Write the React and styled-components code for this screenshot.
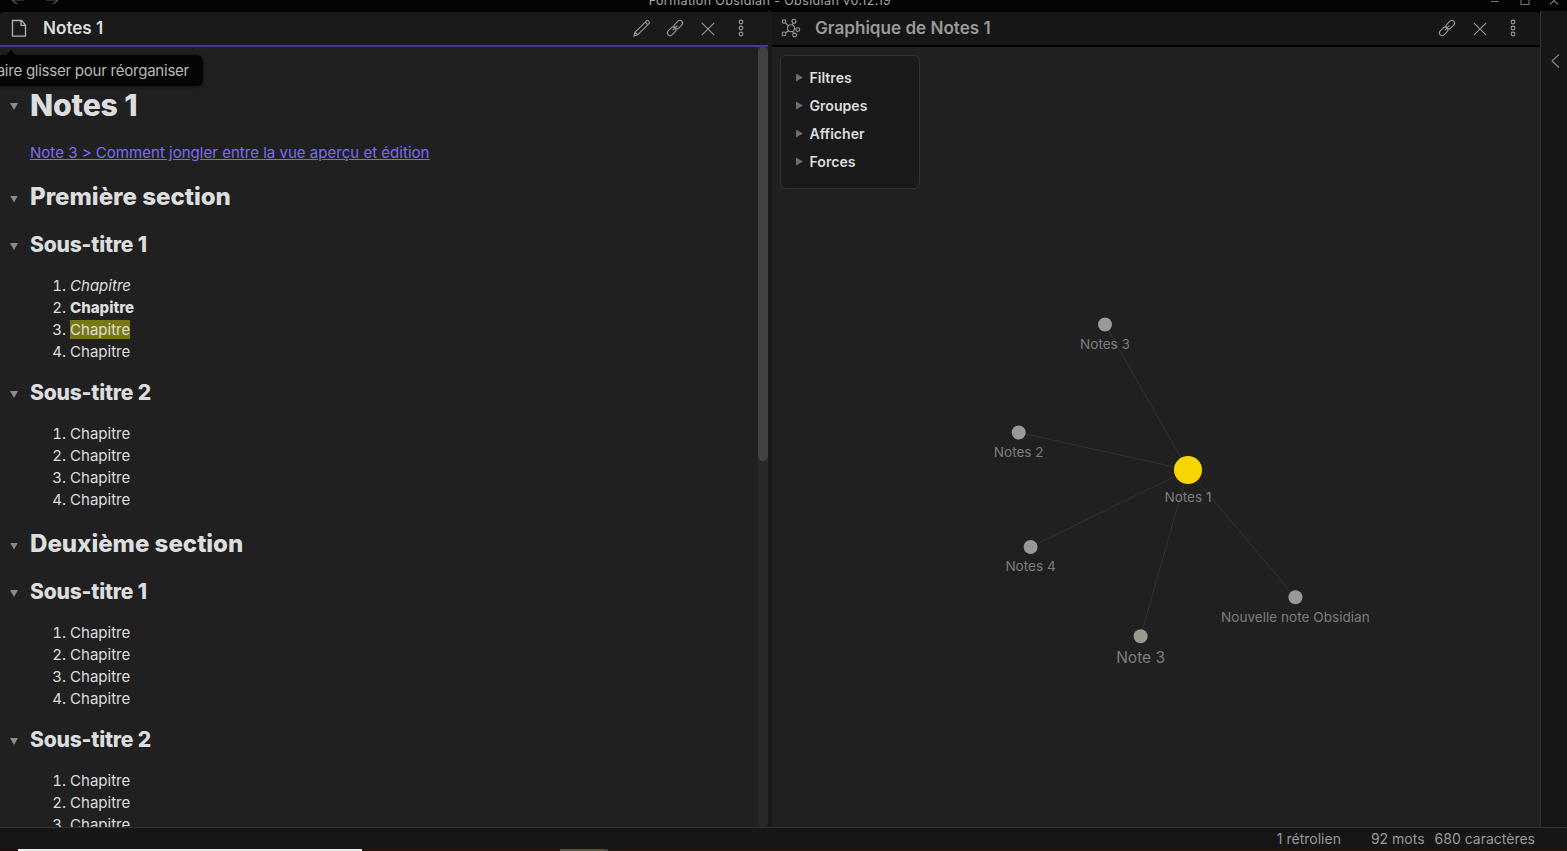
import React from 'react';
import styled, { createGlobalStyle } from 'styled-components';

const Global = createGlobalStyle`
  * { box-sizing: border-box; }
  body { margin: 0; background: #161616; color: #dcddde; font-family: Inter, "Liberation Sans", sans-serif; overflow: hidden; }
`;
const Window = styled.div`
  width: 1567px; height: 851px; display: flex; flex-direction: column; overflow: hidden;
`;
const TitleBar = styled.header`
  height: 11px; flex: none; background: #040404; display: flex; justify-content: space-between;
  align-items: flex-end; overflow: hidden;
`;
const Title = styled.div`
  font-size: 12.5px; line-height: 20px; height: 20px; letter-spacing: 0.38px; color: #a8a8a8; white-space: nowrap;
  padding-right: 27px;
`;
const BarSide = styled.div`
  width: 100px; height: 11px; display: flex; justify-content: ${(p) => (p.$end ? 'flex-end' : 'flex-start')};
`;
const Main = styled.main` flex: 1; display: flex; min-height: 0; background: #1a1a1a; `;
const Pane = styled.section`
  width: 768px; margin-right: ${(p) => p.$gap || 0}px; display: flex; flex-direction: column; padding-top: 1px;
  background: #000; 
`;
const PaneHeader = styled.div`
  height: 35px; flex: none; display: flex; align-items: center; background: ${(p) => (p.$active ? '#1a1a1a' : '#161616')};
  border-bottom: 2px solid ${(p) => (p.$active ? '#483699' : '#000')};
  padding: 0 16px 1px 8px; border-radius: ${(p) => (p.$active ? '4px 0 0 0' : '0 4px 0 0')};
`;
const PaneTitle = styled.div`
  flex: 1; margin-left: ${(p) => p.$left}px; font-size: 17.1px; line-height: 22px; font-weight: 600;
  color: ${(p) => (p.$active ? '#dcddde' : '#999')};
`;
const Actions = styled.div` display: flex; gap: 11px; `;
const Icon = styled.svg`
  width: ${(p) => p.$size || 22}px; height: 22px; flex: none; display: block; fill: none; stroke: ${(p) => p.$color || '#999'};
  stroke-width: ${(p) => p.$w || 1.1}; stroke-linejoin: round; overflow: visible;
`;
const Scroller = styled.div` flex: 1; min-height: 0; display: flex; background: #202020; `;
const Doc = styled.article` flex: 1; padding: 36px 0 0 30px; overflow: hidden; font-size: 15.05px; line-height: 22px; `;
const Track = styled.div` width: 10px; background: #292929; border-radius: 0 0 5px 5px; `;
const Thumb = styled.div` height: 414px; background: #424242; border-radius: 5px; `;
const Heading = styled.div`
  display: flex; align-items: center; margin: 0 0 15px -20px; font-weight: 800; white-space: nowrap;
  padding-bottom: ${(p) => (p.$level === 1 ? 1 : 0)}px;
  height: ${(p) => ({ 1: 44, 2: 36, 3: 30 }[p.$level])}px;
  font-size: ${(p) => ({ 1: 30.3, 2: 24.1, 3: 21.1 }[p.$level])}px;
  letter-spacing: ${(p) => ({ 1: -0.2, 2: -0.03, 3: -0.22 }[p.$level])}px;
`;
const Caret = styled.i`
  width: 8px; height: 7px; margin: ${(p) => (p.$level === 3 ? 3 : 4)}px 12px 0 0; background: #8a8a8a; clip-path: polygon(0 0, 100% 0, 50% 100%);
`;
const Link = styled.a` display: block; margin-bottom: 15px; color: #7b6cf6; text-decoration: underline; `;
const List = styled.ol` margin: 0 0 15px; padding-left: 40px; `;
const Strong = styled.strong` font-weight: 800; `;
const Mark = styled.mark` background: #787812; color: inherit; `;
const Tooltip = styled.div`
  position: absolute; left: -20px; top: 55px; width: 223px; height: 31px; border-radius: 6px; background: #050505;
  color: #b8b8b8; font-size: 15.1px; letter-spacing: -0.28px; line-height: 31px; white-space: nowrap; box-shadow: 0 1px 4px rgba(0,0,0,.5);
  display: flex; justify-content: flex-end; padding-right: 14px;
  &::before { content: ''; position: absolute; left: 26px; top: -5px; border: 5px solid transparent; border-top: 0; border-bottom-color: #050505; }
`;
const GraphArea = styled.div` flex: 1; position: relative; background: #202020; `;
const Graph = styled.svg`
  position: absolute; inset: 0; width: 768px; height: 780px; font-family: Inter, sans-serif;
`;
const Controls = styled.div`
  position: absolute; left: 8px; top: 8px; width: 140px; height: 134px; padding: 8px 15px; background: #1a1a1a;
  border: 1px solid #333; border-radius: 6px;
`;
const Control = styled.div`
  display: flex; align-items: center; height: 28px; padding-bottom: 1px; font-size: 14.1px; font-weight: 600; color: #dcddde;
`;
const Arrow = styled.i` width: 7px; height: 8px; margin-right: 6.5px; background: #6c6c6c; clip-path: polygon(0 0, 100% 50%, 0 100%); `;
const Ribbon = styled.aside` width: 27px; border-left: 1px solid #333; background: #161616; padding: 39px 0 0 3px; `;
const Status = styled.footer`
  height: 22px; flex: none; background: #161616; border-top: 1px solid #333; display: flex; justify-content: flex-end;
  padding-right: 32px; font-size: 14px; line-height: 22px; color: #999;
`;
const StatusItem = styled.span` margin-left: ${(p) => p.$gap || 0}px; white-space: nowrap; `;
const Taskbar = styled.div` height: 2px; flex: none; background: #25180f; display: flex; `;
const TaskPart = styled.div` width: ${(p) => p.$w}px; background: ${(p) => p.$c}; `;

const LinkIcon = () => (
  <Icon viewBox="0 0 22 22">
    <rect x="-4.9" y="-2.7" width="9.8" height="5.4" rx="2.7" transform="translate(14.3 7.7) rotate(-45)" />
    <rect x="-4.9" y="-2.7" width="9.8" height="5.4" rx="2.7" transform="translate(7.7 14.3) rotate(-45)" />
    <path d="M8.7 13.3 13.3 8.7" />
  </Icon>
);
const CloseIcon = () => <Icon viewBox="0 0 22 22"><path d="M4.8 5.8 17.2 18.2M17.2 5.8 4.8 18.2" /></Icon>;
const MoreIcon = () => (
  <Icon viewBox="0 0 22 22">{[5, 11, 17].map((y) => <circle key={y} cx="11" cy={y} r="1.9" />)}</Icon>
);
const PencilIcon = () => (
  <Icon viewBox="0 0 22 22">
    <path d="m2.8 19.2 1.3-4.1L15.6 3.8q.8-.8 1.7.1l.7.7q.9.9.1 1.7L6.8 17.6ZM14.3 5.1l2.5 2.5M4.1 15.1l2.7 2.5" />
  </Icon>
);
const FileIcon = () => (
  <Icon viewBox="0 0 22 22" $color="#b4b4b4" $w="1.3"><path d="M4.5 3.5h9l4 4.4v11.3h-13ZM13 3.7v4.7h4.3" /></Icon>
);
const GraphIcon = () => (
  <Icon viewBox="0 0 22 22">
    <circle cx="11" cy="11.3" r="3.5" /><circle cx="4" cy="4.5" r="1.8" /><circle cx="14" cy="4.3" r="2" />
    <circle cx="17.8" cy="12.6" r="1.9" /><circle cx="4" cy="16.9" r="1.9" /><circle cx="14.6" cy="18" r="1.9" />
    <path d="m5.4 5.9 3.1 2.9M13.3 6.3l-1 1.8M14.5 11.9l1.4.3M8.5 13.7 5.5 15.7M12.6 14.4l1.1 1.8" />
  </Icon>
);

const H = ({ level, children }) => <Heading $level={level}><Caret $level={level} />{children}</Heading>;
const Chapters = () => <List>{[1, 2, 3, 4].map((n) => <li key={n}>Chapitre</li>)}</List>;

const center = { x: 416, y: 423 };
const nodes = [
  { x: 333, y: 277.5, label: 'Notes 3' },
  { x: 246.7, y: 385.5, label: 'Notes 2' },
  { x: 258.6, y: 500, label: 'Notes 4', dy: 24 },
  { x: 368.6, y: 589.3, label: 'Note 3', size: 15.5, color: '#9a9a8c', dy: 26.5 },
  { x: 523.4, y: 550.3, label: 'Nouvelle note Obsidian' },
];

export default function App() {
  return (
    <Window>
      <Global />
      <TitleBar>
        <BarSide>
          <Icon viewBox="0 0 100 22" $size={100} $color="#555"><path d="M12 0h12M12 0l5 4M46 0h12M58 0l-5 4" /></Icon>
        </BarSide>
        <Title>Formation Obsidian - Obsidian v0.12.19</Title>
        <BarSide $end>
          <Icon viewBox="0 0 22 22" $color="#777"><path d="M-54 1.5h8M-24-4h8v8.5h-8ZM5 4.5l8-8M13 4.5l-8-8" /></Icon>
        </BarSide>
      </TitleBar>
      <Main>
        <Pane $gap={4}>
          <PaneHeader $active>
            <FileIcon />
            <PaneTitle $active $left={13}>Notes 1</PaneTitle>
            <Actions><PencilIcon /><LinkIcon /><CloseIcon /><MoreIcon /></Actions>
          </PaneHeader>
          <Scroller>
            <Doc>
              <H level={1}>Notes 1</H>
              <Link>Note 3 &gt; Comment jongler entre la vue aperçu et édition</Link>
              <H level={2}>Première section</H>
              <H level={3}>Sous-titre 1</H>
              <List>
                <li><em>Chapitre</em></li>
                <li><Strong>Chapitre</Strong></li>
                <li><Mark>Chapitre</Mark></li>
                <li>Chapitre</li>
              </List>
              <H level={3}>Sous-titre 2</H>
              <Chapters />
              <H level={2}>Deuxième section</H>
              <H level={3}>Sous-titre 1</H>
              <Chapters />
              <H level={3}>Sous-titre 2</H>
              <Chapters />
            </Doc>
            <Track><Thumb /></Track>
          </Scroller>
        </Pane>
        <Pane>
          <PaneHeader>
            <GraphIcon />
            <PaneTitle $left={13}>Graphique de Notes 1</PaneTitle>
            <Actions><LinkIcon /><CloseIcon /><MoreIcon /></Actions>
          </PaneHeader>
          <GraphArea>
            <Graph viewBox="0 0 768 780" textAnchor="middle">
              {nodes.map((n) => <line key={n.label} x1={n.x} y1={n.y} x2={center.x} y2={center.y} stroke="#333" />)}
              {nodes.map((n) => (
                <g key={n.label}>
                  <circle cx={n.x} cy={n.y} r="7" fill={n.color || '#999'} />
                  <text x={n.x} y={n.y + (n.dy || 24.5)} fontSize={n.size || 13.6} fill="#7d7d7d">{n.label}</text>
                </g>
              ))}
              <circle cx={center.x} cy={center.y} r="14" fill="#f6d500" />
              <text x={center.x} y={center.y + 32} fontSize="13.6" fill="#7d7d7d">Notes 1</text>
            </Graph>
            <Controls>
              {['Filtres', 'Groupes', 'Afficher', 'Forces'].map((t) => <Control key={t}><Arrow />{t}</Control>)}
            </Controls>
          </GraphArea>
        </Pane>
        <Ribbon><Icon viewBox="0 0 22 22" $color="#888"><path d="m15 4.5-7 6.5 7 6.5" /></Icon></Ribbon>
      </Main>
      <Status>
        <StatusItem>1 rétrolien</StatusItem>
        <StatusItem $gap={30}>92 mots</StatusItem>
        <StatusItem $gap={10}>680 caractères</StatusItem>
      </Status>
      <Taskbar>
        <TaskPart $w={18} $c="#201012" /><TaskPart $w={344} $c="#eee" /><TaskPart $w={198} $c="#26140f" />
        <TaskPart $w={44} $c="#57523f" /><TaskPart $w={4} $c="#444" />
      </Taskbar>
      <Tooltip>Faire glisser pour réorganiser</Tooltip>
    </Window>
  );
}
